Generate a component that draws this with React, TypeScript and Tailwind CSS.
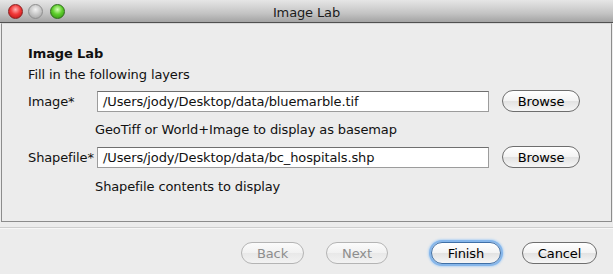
import React from "react";

const font = "font-['DejaVu_Sans',sans-serif] tracking-[-0.12px]";

function Light({ color }: { color: "red" | "gray" | "green" }) {
  const bg = {
    red: "bg-[radial-gradient(circle_at_50%_35%,#ffb0b0_0%,#f23a3a_45%,#b10f0f_100%)] border-[#8a2020]",
    gray: "bg-[radial-gradient(circle_at_50%_35%,#f2f2f2_0%,#c6c6c6_50%,#9a9a9a_100%)] border-[#8e8e8e]",
    green: "bg-[radial-gradient(circle_at_50%_35%,#d6ffb8_0%,#5fcf2c_45%,#2e8a12_100%)] border-[#2f6f1a]",
  }[color];
  return <div className={`w-[15px] h-[15px] rounded-full border ${bg}`} />;
}

function Pill({
  label,
  width,
  disabled,
  primary,
}: {
  label: string;
  width: string;
  disabled?: boolean;
  primary?: boolean;
}) {
  let cls =
    "border-[#6e6e6e] text-black bg-[linear-gradient(#ffffff,#f3f3f3_50%,#e2e2e2_51%,#f6f6f6)]";
  if (disabled)
    cls =
      "border-[#b4b4b4] text-[#8d8d8d] bg-[linear-gradient(#fbfbfb,#f1f1f1_50%,#e8e8e8_51%,#f2f2f2)]";
  if (primary)
    cls =
      "border-[#3f6fa6] text-black bg-[linear-gradient(#ffffff,#f3f3f3_50%,#e2e2e2_51%,#f6f6f6)] shadow-[0_0_0_2px_#86b6ea,0_0_2px_3px_#b9d6f3]";
  return (
    <div
      className={`${width} h-[22px] rounded-full border flex items-center justify-center text-[13px] leading-none ${cls}`}
    >
      {label}
    </div>
  );
}

function FieldRow({ label, value }: { label: string; value: string }) {
  return (
    <div className="flex items-center h-[22px]">
      <div className="w-[69px] text-[13px] leading-none">{label}</div>
      <div className="w-[392px] h-[21px] bg-white border border-[#9c9c9c] border-t-[#6f6f6f] flex items-center pl-[5px] text-[13px] leading-none">
        {value}
      </div>
      <div className="ml-[13px]">
        <Pill label="Browse" width="w-[78px]" />
      </div>
    </div>
  );
}

export default function App() {
  return (
    <div className={`w-[613px] h-[274px] bg-[#ececec] flex flex-col text-[#111] ${font}`}>
      <div className="h-[23px] shrink-0 relative flex items-center bg-[linear-gradient(#e6e6e6,#c4c4c4_60%,#a4a4a4)] border-b border-[#505050]">
        <div className="flex items-center pl-[8px] gap-[5px]">
          <Light color="red" />
          <Light color="gray" />
          <div className="ml-[2px]">
            <Light color="green" />
          </div>
        </div>
        <div className="absolute inset-0 flex items-center justify-center text-[13px] text-[#1c1c1c] pt-[3px]">
          Image Lab
        </div>
      </div>

      <div className="mx-[1px] h-[199px] shrink-0 border border-[#8c8c8c] border-t-[#d8d8d8] pl-[26px] pt-[22px] flex flex-col">
        <div className="h-[16px] text-[13px] font-bold leading-[16px]">Image Lab</div>
        <div className="h-[16px] mt-[5px] text-[13px] leading-[16px]">Fill in the following layers</div>
        <div className="mt-[7px]">
          <FieldRow label="Image*" value="/Users/jody/Desktop/data/bluemarble.tif" />
        </div>
        <div className="h-[16px] mt-[10px] pl-[67px] text-[13px] leading-[16px]">
          GeoTiff or World+Image to display as basemap
        </div>
        <div className="mt-[8px]">
          <FieldRow label="Shapefile*" value="/Users/jody/Desktop/data/bc_hospitals.shp" />
        </div>
        <div className="h-[16px] mt-[11px] pl-[67px] text-[13px] leading-[16px]">
          Shapefile contents to display
        </div>
      </div>

      <div className="mt-[5px] h-px bg-[#cdcdcd]" />
      <div className="h-px bg-[#f7f7f7]" />

      <div className="mt-[13px] flex items-center pl-[241px]">
        <Pill label="Back" width="w-[63px]" disabled />
        <div className="ml-[22px]">
          <Pill label="Next" width="w-[62px]" disabled />
        </div>
        <div className="ml-[43px]">
          <Pill label="Finish" width="w-[70px]" primary />
        </div>
        <div className="ml-[21px]">
          <Pill label="Cancel" width="w-[75px]" />
        </div>
      </div>
    </div>
  );
}
